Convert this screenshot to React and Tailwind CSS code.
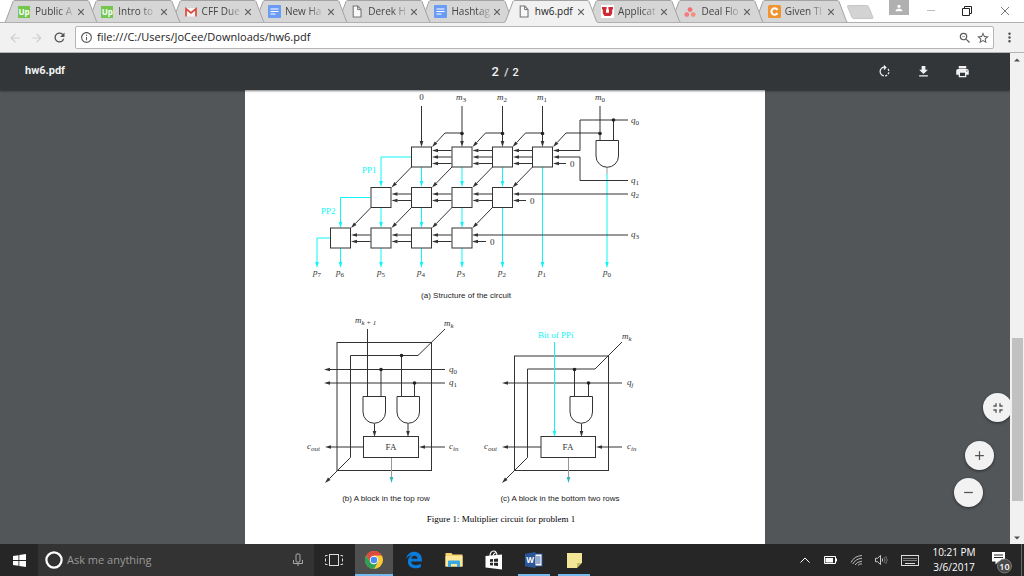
import React from 'react';
import {
  MdAdd,
  MdArrowBack,
  MdArrowForward,
  MdFileDownload,
  MdFullscreenExit,
  MdInfoOutline,
  MdMoreVert,
  MdPerson,
  MdPrint,
  MdRefresh,
  MdRemove,
  MdRotateRight,
  MdStarBorder,
  MdZoomOut,
} from 'react-icons/md';

const INK = '#333';
const CYAN = '#0ff5f5';

/* ---------- Favicons ---------- */

const UpIcon = () => (
  <span className="flex h-3 w-3 items-center justify-center bg-[#73c74f] text-[8px] leading-none font-bold text-white">Up</span>
);

const GmailIcon = () => (
  <svg viewBox="0 0 12 12" className="h-3 w-3">
    <path d="M0.5 2h11v8.5h-11z" fill="#f3f3f3" />
    <path d="M1 10.5V2.8L6 7l5-4.2v7.7" fill="none" stroke="#d9493c" strokeWidth="1.7" />
  </svg>
);

const DocsIcon = () => (
  <svg viewBox="0 0 13 13" className="h-[13px] w-[13px]">
    <rect width="13" height="13" rx="1" fill="#6a9cf5" />
    <path d="M2.5 4h8M2.5 6.5h8M2.5 9h5" stroke="#fff" strokeWidth="1.1" />
  </svg>
);

const FileIcon = () => (
  <svg viewBox="0 0 12 13" className="h-[13px] w-3">
    <path d="M2.2 1h4.6l3.2 3.4V12H2.2z" fill="#f8f8f8" stroke="#777" strokeWidth="1.1" />
    <path d="M6.6 1v3.6H10" fill="none" stroke="#777" strokeWidth="1" />
  </svg>
);

const UtahIcon = () => (
  <svg viewBox="0 0 13 13" className="h-[13px] w-[13px]">
    <rect width="13" height="13" fill="#fff" />
    <path d="M1 2h4.6v2.6H5v3.2h3V4.6h-.6V2H12v2.6h-.8v4L9.4 11H3.6L1.8 8.6v-4H1z" fill="#cf2b35" />
  </svg>
);

const AsanaIcon = () => (
  <svg viewBox="0 0 12 12" className="h-3 w-3">
    <circle cx="6" cy="3.6" r="2.4" fill="#f2706f" />
    <circle cx="2.8" cy="8.6" r="2.4" fill="#f5797f" />
    <circle cx="9.2" cy="8.6" r="2.4" fill="#f58f7c" />
  </svg>
);

const CheggIcon = () => (
  <svg viewBox="0 0 13 13" className="h-[13px] w-[13px]">
    <rect width="13" height="13" rx="1.5" fill="#f1942f" />
    <path d="M9.4 4.9A3.2 3.2 0 1 0 9.4 8.1" fill="none" stroke="#fff" strokeWidth="2.1" />
  </svg>
);

const tabs = [
  { title: 'Public A', Icon: UpIcon },
  { title: 'Intro to', Icon: UpIcon },
  { title: 'CFF Due', Icon: GmailIcon },
  { title: 'New Ha', Icon: DocsIcon },
  { title: 'Derek H', Icon: FileIcon },
  { title: 'Hashtag', Icon: DocsIcon },
  { title: 'hw6.pdf', Icon: FileIcon, active: true },
  { title: 'Applicat', Icon: UtahIcon },
  { title: 'Deal Flo', Icon: AsanaIcon },
  { title: 'Given Tl', Icon: CheggIcon },
];

/* ---------- Browser chrome ---------- */

const Tab = ({ title, Icon, active, order }) => (
  <div className="relative h-[23px] min-w-0 flex-1" style={{ zIndex: order }}>
    <svg viewBox="0 0 94 23" preserveAspectRatio="none" className="absolute top-0 left-0 h-[23px] w-[94px]">
      <path
        d="M0 23L1.5 21.5L9 1.5Q9.5 0.5 11 0.5H83Q84.5 0.5 85 1.5L92.5 21.5L94 23z"
        fill={active ? '#f1f1f1' : '#d6d6d6'}
      />
      <path
        d="M0 22.5L1.5 21.5L9 1.5Q9.5 0.5 11 0.5H83Q84.5 0.5 85 1.5L92.5 21.5L94 22.5"
        fill="none"
        stroke="#a3a3a3"
      />
      {!active && <path d="M0 22.5H94" stroke="#b0b0b0" />}
    </svg>
    <div className="relative flex h-[23px] items-center pl-[14px]">
      <button type="button" role="tab" aria-selected={!!active} className="flex w-[55px] items-center">
        <span className="flex w-[17px] shrink-0">
          <Icon />
        </span>
        <span
          className={
            active
              ? 'text-[10px] whitespace-nowrap text-[#222]'
              : 'text-[10px] whitespace-nowrap text-[#444] [mask-image:linear-gradient(to_right,black_65%,rgba(0,0,0,0.2))]'
          }
        >
          {title}
        </span>
      </button>
      <button type="button" aria-label="Close tab" className="ml-1">
        <svg viewBox="0 0 8 8" className="h-2 w-2">
          <path d="M1.2 1.2l5.6 5.6M6.8 1.2L1.2 6.8" stroke="#5a5a5a" strokeWidth="1.1" />
        </svg>
      </button>
    </div>
  </div>
);

const TabStrip = () => (
  <div className="flex h-[23px] shrink-0 border-b border-[#b0b0b0] bg-white">
    <div role="tablist" className="isolate ml-1 flex h-[23px] w-[833px]">
      {tabs.map((t, i) => (
        <Tab key={i} {...t} order={t.active ? 20 : 10 - i} />
      ))}
    </div>
    <button type="button" aria-label="New tab" className="mt-[5px] ml-[9px] h-[15px]">
      <svg viewBox="0 0 28 15" className="h-[15px] w-7">
        <path d="M2.5 0.5H20.5Q22 0.5 22.5 1.5L27 12.5Q27.3 13.5 26 13.5H8Q6.5 13.5 6 12.5L1.5 1.5Q1.3 0.5 2.5 0.5z" fill="#d3d3d3" stroke="#c6c6c6" />
      </svg>
    </button>
    <div className="ml-auto flex">
      <button type="button" aria-label="Profile" className="flex h-[15px] w-5 items-center justify-center bg-[#b0b0b0] text-white">
        <MdPerson size={10} />
      </button>
      <button type="button" aria-label="Minimize" className="ml-3 flex h-[22px] w-5 items-center justify-center">
        <svg viewBox="0 0 8 8" className="h-2 w-2"><path d="M0 3.5H8" stroke="#bbb" /></svg>
      </button>
      <button type="button" aria-label="Restore" className="ml-4 flex h-[22px] w-5 items-center justify-center">
        <svg viewBox="0 0 10 10" className="h-[10px] w-[10px]">
          <path d="M0.5 2.5H7.5V9.5H0.5zM2.5 2.5V0.5H9.5V7.5H7.5" fill="none" stroke="#222" />
        </svg>
      </button>
      <button type="button" aria-label="Close" className="mr-[9px] ml-[18px] flex h-[22px] w-5 items-center justify-center">
        <svg viewBox="0 0 10 10" className="h-[10px] w-[10px]">
          <path d="M1 1l8 8M9 1L1 9" stroke="#777" />
        </svg>
      </button>
    </div>
  </div>
);

const AddressBar = () => (
  <div className="flex h-[30px] shrink-0 items-center border-b border-[#b5b5b5] bg-[#f1f1f1] pl-2">
    <button type="button" aria-label="Back" className="mr-2 text-[#cfcfcf]"><MdArrowBack size={14} /></button>
    <button type="button" aria-label="Forward" className="mr-2 text-[#cfcfcf]"><MdArrowForward size={14} /></button>
    <button type="button" aria-label="Reload" className="mr-2 text-[#555]"><MdRefresh size={15} /></button>
    <div className="flex h-[23px] flex-1 items-center rounded-xs border border-[#b5b5b5] bg-white pr-[3px] pl-1">
      <MdInfoOutline size={13} className="mr-1 text-[#5a5a5a]" />
      <input
        type="text"
        aria-label="Address"
        defaultValue="file:///C:/Users/JoCee/Downloads/hw6.pdf"
        className="min-w-0 flex-1 bg-transparent text-[11px] text-[#222] outline-none"
      />
      <button type="button" aria-label="Zoom" className="mr-1 text-[#5a5a5a]"><MdZoomOut size={14} /></button>
      <button type="button" aria-label="Bookmark" className="text-[#5a5a5a]"><MdStarBorder size={14} /></button>
    </div>
    <button type="button" aria-label="Menu" className="ml-2 mr-[7px] text-[#555]"><MdMoreVert size={15} /></button>
  </div>
);

/* ---------- Circuit drawing primitives ---------- */

// Polyline with an arrow head at its last point
const Arrow = ({ pts, color = INK, head = color }) => {
  const [x1, y1] = pts[pts.length - 2];
  const [x, y] = pts[pts.length - 1];
  const a = Math.atan2(y - y1, x - x1);
  const len = 6;
  const half = 1.8;
  const bx = x - len * Math.cos(a);
  const by = y - len * Math.sin(a);
  const dx = half * Math.sin(a);
  const dy = half * Math.cos(a);
  return (
    <g>
      <polyline points={[...pts.slice(0, -1), [bx, by]].map((p) => p.join(',')).join(' ')} fill="none" stroke={color} />
      <polygon points={`${x},${y} ${bx + dx},${by - dy} ${bx - dx},${by + dy}`} fill={head} />
    </g>
  );
};

const Line = ({ pts, color = INK }) => (
  <polyline points={pts.map((p) => p.join(',')).join(' ')} fill="none" stroke={color} />
);

const Dot = ({ x, y }) => <circle cx={x} cy={y} r="1.8" fill="#222" />;

const Gate = ({ x, y }) => (
  <path d={`M${x} ${y}h22.5v15.5a11.25 11.25 0 0 1 -22.5 0z`} fill="#fff" stroke={INK} />
);

// Italic variable with a subscript; digits in the subscript stay upright
const Label = ({ x, y, base, sub, anchor = 'start' }) => (
  <text x={x} y={y} textAnchor={anchor} fontSize="9" fontStyle="italic" fill="#333">
    {base}
    <tspan fontSize="7" dy="2" fontStyle={isNaN(sub) ? 'italic' : 'normal'}>{sub}</tspan>
  </text>
);

const svgFont = "font-['Liberation_Serif',serif]";

/* ---------- (a) whole circuit ---------- */

const cols = [340.5, 381, 421.5, 462, 502.5, 542.5];
const rows = [
  { y: 157, first: 2, wires: [150.5, 157, 163.5] },
  { y: 197.5, first: 1, wires: [194, 200.5] },
  { y: 238, first: 0, wires: [235, 241.5] },
];

const CircuitStructure = () => (
  <svg viewBox="291 90 350 198" className={`block h-[198px] w-[350px] ${svgFont}`}>
    {/* partial products and outputs */}
    {[2, 3, 4].map((c) => <Arrow key={c} pts={[[cols[c], 167], [cols[c], 187]]} color={CYAN} />)}
    {[1, 2, 3].map((c) => <Arrow key={c} pts={[[cols[c], 207], [cols[c], 228]]} color={CYAN} />)}
    {[0, 1, 2, 3].map((c) => <Arrow key={c} pts={[[cols[c], 248], [cols[c], 268]]} color={CYAN} />)}
    <Arrow pts={[[502.5, 207], [502.5, 268]]} color={CYAN} />
    <Arrow pts={[[542.5, 167], [542.5, 268]]} color={CYAN} />
    <Line pts={[[607, 167], [607, 174]]} color="#999" />
    <Arrow pts={[[607, 174], [607, 268]]} color={CYAN} />
    <Arrow pts={[[411, 157], [381, 157], [381, 187]]} color={CYAN} />
    <Arrow pts={[[370, 197.5], [340.5, 197.5], [340.5, 228]]} color={CYAN} />
    <Arrow pts={[[330, 238], [317, 238], [317, 268]]} color={CYAN} />

    {/* top inputs */}
    {[2, 3, 4, 5].map((c) => <Arrow key={c} pts={[[cols[c], 106], [cols[c], 147]]} />)}
    {[3, 4, 5].map((c) => (
      <g key={c}>
        <Arrow pts={[[cols[c], 133], [cols[c] - 17, 133], [cols[c] - 30, 147]]} />
        <Dot x={cols[c]} y={133.5} />
      </g>
    ))}
    <Line pts={[[600, 106], [600, 140]]} />
    <Arrow pts={[[600, 133], [566, 133], [553, 147]]} />
    <Dot x={600} y={133.5} />

    {/* q inputs */}
    <Arrow pts={[[628, 120], [580, 120], [580, 150.5], [553, 150.5]]} />
    <Line pts={[[613.5, 120], [613.5, 140]]} />
    <Dot x={613.5} y={120} />
    <Arrow pts={[[628, 180.5], [580, 180.5], [580, 157], [553, 157]]} />
    <Arrow pts={[[566, 163.5], [553, 163.5]]} />
    <Arrow pts={[[628, 194], [513, 194]]} />
    <Arrow pts={[[526, 200.5], [513, 200.5]]} />
    <Arrow pts={[[628, 235], [472, 235]]} />
    <Arrow pts={[[486, 241.5], [472, 241.5]]} />
    <Gate x={596} y={140.5} />

    {/* cells with the wires that join them */}
    {rows.map((r, ri) =>
      [0, 1, 2, 3].map((i) => {
        const x = cols[r.first + i];
        return (
          <g key={`${ri}-${i}`}>
            <rect x={x - 10} y={r.y - 10} width="20" height="20" fill="#fff" stroke={INK} />
            {i < 3 && r.wires.map((w) => <Arrow key={w} pts={[[x + 30, w], [x + 10.5, w]]} />)}
            {ri < 2 && <Arrow pts={[[x - 10, r.y + 10], [x - 30, r.y + 30.5]]} />}
          </g>
        );
      })
    )}

    <text x="421.5" y="100" textAnchor="middle" fontSize="9" fill="#333">0</text>
    <Label x={461} y={100} base="m" sub="3" anchor="middle" />
    <Label x={502} y={100} base="m" sub="2" anchor="middle" />
    <Label x={542} y={100} base="m" sub="1" anchor="middle" />
    <Label x={600} y={100} base="m" sub="0" anchor="middle" />
    <Label x={631} y={123} base="q" sub="0" />
    <Label x={631} y={183} base="q" sub="1" />
    <Label x={631} y={196} base="q" sub="2" />
    <Label x={631} y={237} base="q" sub="3" />
    <text x="570" y="167" fontSize="9" fill="#333">0</text>
    <text x="530" y="204" fontSize="9" fill="#333">0</text>
    <text x="490" y="245" fontSize="9" fill="#333">0</text>
    <text x="362" y="173" fontSize="9" fill={CYAN}>PP1</text>
    <text x="321" y="214" fontSize="9" fill={CYAN}>PP2</text>
    {[[317, 7], [340, 6], [381, 5], [421, 4], [461, 3], [502, 2], [542, 1], [607, 0]].map(([x, n]) => (
      <Label key={n} x={x} y={275} base="p" sub={n} anchor="middle" />
    ))}
  </svg>
);

/* ---------- (b) and (c) single blocks ---------- */

const TopRowBlock = () => (
  <svg viewBox="301 310 170 183" className={`block h-[183px] w-[170px] ${svgFont}`}>
    <rect x="337" y="342.5" width="94.5" height="128" fill="none" stroke={INK} />
    <Line pts={[[367.5, 329], [367.5, 396]]} />
    <Arrow pts={[[445, 329], [418, 355.5], [350.5, 355.5], [350.5, 457.5], [325, 483]]} />
    <Arrow pts={[[445, 369.5], [324, 369.5]]} />
    <Arrow pts={[[445, 383], [324, 383]]} />
    <Line pts={[[401.5, 355.5], [401.5, 396]]} />
    <Line pts={[[381, 369.5], [381, 396]]} />
    <Line pts={[[414.5, 383], [414.5, 396]]} />
    <Dot x={401.5} y={355.5} />
    <Dot x={381} y={369.5} />
    <Dot x={414.5} y={383} />
    <Gate x={363} y={396.5} />
    <Gate x={397} y={396.5} />
    <Arrow pts={[[374.5, 423.5], [374.5, 437]]} />
    <Arrow pts={[[408, 423.5], [408, 437]]} />
    <rect x="363.5" y="436.5" width="55" height="21" fill="#fff" stroke={INK} />
    <text x="391" y="450" textAnchor="middle" fontSize="9" fill="#333">FA</text>
    <Arrow pts={[[363.5, 447], [325, 447]]} />
    <Arrow pts={[[445, 447], [419, 447]]} />
    <Arrow pts={[[391.5, 458], [391.5, 483]]} color="#999" head="#2fb5b5" />
    <Label x={355} y={323} base="m" sub="k + 1" />
    <Label x={444} y={326} base="m" sub="k" />
    <Label x={449} y={372} base="q" sub="0" />
    <Label x={449} y={385} base="q" sub="1" />
    <Label x={307} y={449} base="c" sub="out" />
    <Label x={449} y={449} base="c" sub="in" />
  </svg>
);

const LowerRowBlock = () => (
  <svg viewBox="475 310 170 183" className={`block h-[183px] w-[170px] ${svgFont}`}>
    <rect x="514.5" y="356" width="94" height="114.5" fill="none" stroke={INK} />
    <Arrow pts={[[622, 342], [595, 369], [527.5, 369], [527.5, 457.5], [502, 483]]} />
    <Arrow pts={[[622, 383], [502, 383]]} />
    <Line pts={[[574.5, 369], [574.5, 396]]} />
    <Line pts={[[588.5, 383], [588.5, 396]]} />
    <Dot x={574.5} y={369.5} />
    <Dot x={588.5} y={383} />
    <Gate x={570} y={396.5} />
    <Arrow pts={[[581.5, 423.5], [581.5, 437]]} />
    <rect x="541" y="436.5" width="54.5" height="21" fill="#fff" stroke={INK} />
    <Arrow pts={[[554.5, 342], [554.5, 437]]} color={CYAN} />
    <text x="568" y="450" textAnchor="middle" fontSize="9" fill="#333">FA</text>
    <Arrow pts={[[541, 447], [502, 447]]} />
    <Arrow pts={[[622, 447], [596, 447]]} />
    <Arrow pts={[[568.5, 458], [568.5, 483]]} color="#999" head="#2fb5b5" />
    <text x="538" y="338" fontSize="9" fill={CYAN}>Bit of PPi</text>
    <Label x={622} y={339} base="m" sub="k" />
    <Label x={627} y={385} base="q" sub="j" />
    <Label x={484} y={449} base="c" sub="out" />
    <Label x={627} y={449} base="c" sub="in" />
  </svg>
);

const captionClass = "text-center font-['Liberation_Sans',sans-serif] leading-[12px] text-[#222]";

const PdfPage = () => (
  <main className="mx-auto min-h-full w-[520px] bg-white">
    <figure>
      <figure className="ml-[46px] w-[350px]">
        <CircuitStructure />
        <figcaption className={`mt-[2px] text-[8px] ${captionClass}`}>(a) Structure of the circuit</figcaption>
      </figure>
      <div className="mt-2 ml-[56px] flex gap-1">
        <figure>
          <TopRowBlock />
          <figcaption className={`text-[8px] ${captionClass}`}>(b) A block in the top row</figcaption>
        </figure>
        <figure>
          <LowerRowBlock />
          <figcaption className={`text-[8px] ${captionClass}`}>(c) A block in the bottom two rows</figcaption>
        </figure>
      </div>
      <figcaption className="mt-2 pr-2 text-center font-['Liberation_Serif',serif] text-[9px] leading-[12px] text-black">
        Figure 1: Multiplier circuit for problem 1
      </figcaption>
    </figure>
  </main>
);

/* ---------- PDF viewer ---------- */

const roundButton =
  'absolute flex h-[29px] w-[29px] items-center justify-center rounded-full bg-[#f2f2f2] text-[#555] shadow-[0_1px_3px_rgba(0,0,0,0.5)]';

const PdfViewer = () => (
  <div className="flex min-h-0 flex-1">
    <div className="relative flex min-w-0 flex-1 flex-col overflow-hidden bg-[#525659]">
      <header className="z-10 grid h-[37px] shrink-0 grid-cols-3 items-center bg-[#323639] pr-10 pl-[25px] font-['Roboto',sans-serif] text-[#f1f1f1] shadow-[0_1px_2px_rgba(0,0,0,0.5)]">
        <h1 className="text-[11px] font-bold">hw6.pdf</h1>
        <div className="flex items-baseline justify-center gap-1 pl-[14px] text-[11px] font-medium">
          <input type="text" aria-label="Page number" defaultValue="2" className="w-[10px] bg-transparent text-center text-[13px] outline-none" />
          <span>/</span>
          <span>2</span>
        </div>
        <div className="flex justify-end gap-6">
          <button type="button" aria-label="Rotate clockwise"><MdRotateRight size={15} /></button>
          <button type="button" aria-label="Download"><MdFileDownload size={15} /></button>
          <button type="button" aria-label="Print"><MdPrint size={15} /></button>
        </div>
      </header>
      <div className="min-h-0 flex-1 overflow-hidden">
        <PdfPage />
      </div>
      <button type="button" aria-label="Fit to page" className={`${roundButton} -right-[2px] bottom-[122px]`}><MdFullscreenExit size={16} /></button>
      <button type="button" aria-label="Zoom in" className={`${roundButton} right-4 bottom-[74px]`}><MdAdd size={15} /></button>
      <button type="button" aria-label="Zoom out" className={`${roundButton} right-[27px] bottom-[37px]`}><MdRemove size={15} /></button>
    </div>
    <div className="flex w-[14px] shrink-0 flex-col items-center bg-[#f1f1f1] py-1">
      <svg viewBox="0 0 6 4" className="mt-px h-1 w-[6px]"><path d="M3 0.5L6 3.5H0z" fill="#505050" /></svg>
      <div className="grow-[275]" />
      <div className="w-[11px] grow-[163] bg-[#c1c1c1]" />
      <div className="grow-[35]" />
      <svg viewBox="0 0 6 4" className="h-1 w-[6px]"><path d="M3 3.5L6 0.5H0z" fill="#505050" /></svg>
    </div>
  </div>
);

/* ---------- Taskbar ---------- */

const ChromeLogo = () => (
  <svg viewBox="0 0 18 18" className="h-[18px] w-[18px]">
    <circle cx="9" cy="9" r="9" fill="#fcc934" />
    <path d="M9 9L1.2 4.5A9 9 0 0 1 16.8 4.5H9z" fill="#dd4b3e" />
    <path d="M1.2 4.5L5.2 11.2L9 9V4.5z" fill="#dd4b3e" />
    <path d="M1.2 4.5L5.2 11.2Q6.5 13.3 9 13.2L12.8 11.2L9 18A9 9 0 0 1 1.2 4.5z" fill="#2ea05a" />
    <circle cx="9" cy="9" r="4.2" fill="#fff" />
    <circle cx="9" cy="9" r="3.3" fill="#4a8af4" />
  </svg>
);

const EdgeLogo = () => (
  <svg viewBox="0 0 24 24" className="h-[18px] w-[18px]">
    <path
      d="M1.5 10.5C2.5 4.5 7 1 12.5 1c6.5 0 10 5 10 10.5V14H8.2c.2 3.5 3 5 6.3 5 2.5 0 4.7-.7 6.6-1.9v4.4C19.2 22.5 16.5 23 14 23 8 23 3.8 19.5 3.8 14c0-3.500 2-6.500 5-8-3.300.3-5.800 2-7.300 4.500zM8.400 10.200h8.200C16.500 7.600 15 6.200 12.700 6.200S8.800 7.700 8.400 10.200z"
      fill="#0b7bdc"
    />
  </svg>
);

const ExplorerLogo = () => (
  <svg viewBox="0 0 18 16" className="h-4 w-[18px]">
    <path d="M0.5 1h6l1 1.5h10v12H0.5z" fill="#f6d36f" />
    <path d="M0.5 4h17v10.5H0.5z" fill="#fce79b" />
    <path d="M3 15V9.5Q3 8.5 4 8.5H14Q15 8.5 15 9.5V15H12V12H6V15z" fill="#3aa7e0" />
  </svg>
);

const StoreLogo = () => (
  <svg viewBox="0 0 18 20" className="h-5 w-[18px]">
    <path d="M5 6C5 3 6.5 1 8.5 1S12 3 12 6M8 6c.5-2.5 2-3.5 3.5-3.2" fill="none" stroke="#fff" strokeWidth="1.1" />
    <path d="M0.5 6L17 4.5V19.5L0.5 17.5z" fill="#fff" />
    <path d="M5 9.2l3-.2v2.8H5zM9 8.9l4-.3v3.2H9zM5 12.7h3v2.8l-3-.2zM9 12.7h4v3.2l-4-.3z" fill="#262626" />
  </svg>
);

const WordLogo = () => (
  <svg viewBox="0 0 18 16" className="h-4 w-[18px]">
    <rect x="8.5" y="2" width="8.5" height="12" fill="#fff" stroke="#2b579a" />
    <path d="M11 5h4.5M11 7h4.5M11 9h4.5M11 11h4.5" stroke="#2b579a" />
    <path d="M0 1.8L10.5 0V16L0 14.2z" fill="#2b579a" />
    <text x="5.2" y="11" textAnchor="middle" fontSize="8" fontWeight="700" fill="#fff">W</text>
  </svg>
);

const NoteLogo = () => (
  <svg viewBox="0 0 15 15" className="h-[15px] w-[15px]">
    <path d="M0 0H15V10H10V15H0z" fill="#f3e696" />
    <path d="M10 10H15L10 15z" fill="#c9bb62" />
  </svg>
);

const apps = [
  { name: 'Chrome', Logo: ChromeLogo, cell: 'mx-px w-[38px] border-[#76b9ed] bg-[#505050]' },
  { name: 'Edge', Logo: EdgeLogo, cell: 'mx-px w-[38px] border-transparent' },
  { name: 'File Explorer', Logo: ExplorerLogo, cell: 'mx-px w-[38px] border-transparent' },
  { name: 'Store', Logo: StoreLogo, cell: 'mx-px w-[38px] border-transparent' },
  { name: 'Word', Logo: WordLogo, cell: 'mx-1 w-8 border-[#76b9ed]' },
  { name: 'Sticky Notes', Logo: NoteLogo, cell: 'mx-1 w-8 border-[#76b9ed]' },
];

const Taskbar = () => (
  <footer className="flex h-8 shrink-0 items-center bg-[#262626] text-white">
    <button type="button" aria-label="Start" className="flex h-8 w-[38px] items-center justify-center">
      <svg viewBox="0 0 13 13" className="h-[13px] w-[13px]">
        <path d="M0 2L5.5 1.2V6H0zM6.3 1.1L13 0V6H6.3zM0 6.9H5.5V11.7L0 11zM6.3 6.9H13V13L6.3 12z" fill="#fff" />
      </svg>
    </button>
    <div className="flex h-8 w-[276px] items-center bg-[#333] pr-[10px] pl-[7px]">
      <svg viewBox="0 0 18 18" className="h-[18px] w-[18px]">
        <circle cx="9" cy="9" r="7.6" fill="none" stroke="#fff" strokeWidth="2.2" />
      </svg>
      <input
        type="text"
        aria-label="Search"
        placeholder="Ask me anything"
        className="ml-1 min-w-0 flex-1 bg-transparent text-[11px] outline-none placeholder:text-[#9a9a9a]"
      />
      <svg viewBox="0 0 12 14" className="h-[14px] w-3" fill="none" stroke="#aaa">
        <rect x="4" y="1" width="4" height="8" rx="1" />
        <path d="M1.5 7v3.5h9V7M6 10.5V13" />
      </svg>
    </div>
    <button type="button" aria-label="Task view" className="flex h-8 w-10 items-center justify-center">
      <svg viewBox="0 0 18 12" className="h-3 w-[18px]" fill="none" stroke="#ddd">
        <rect x="4.5" y="0.5" width="9" height="11" />
        <path d="M2.5 1.5H0.5V10.5H2.5M15.5 1.5H17.5V10.5H15.5" strokeDasharray="3 2" />
      </svg>
    </button>
    {apps.map(({ name, Logo, cell }) => (
      <button
        key={name}
        type="button"
        aria-label={name}
        className={`flex h-8 items-center justify-center border-b-2 pt-[2px] ${cell}`}
      >
        <Logo />
      </button>
    ))}
    <div className="ml-auto flex items-center">
      <svg viewBox="0 0 12 8" className="h-2 w-3" fill="none" stroke="#fff"><path d="M1.5 6.5L6 2L10.5 6.5" /></svg>
      <svg viewBox="0 0 13 8" className="ml-[13px] h-2 w-[13px]">
        <path d="M0.5 0.5H11.5V7.5H0.5z" fill="none" stroke="#fff" />
        <path d="M1.5 2H9V6.5H1.5zM12 2.5h1v3h-1z" fill="#fff" />
      </svg>
      <svg viewBox="0 0 13 12" className="ml-[13px] h-3 w-[13px]" fill="none" stroke="#ccc" strokeWidth="0.9">
        <path d="M1 8.5Q4 2 12 1.5M2.8 10Q5.5 4.8 12 4.3M5 11Q7 7.6 12 7.2M8 11.3Q9 9.8 12 9.8" />
      </svg>
      <svg viewBox="0 0 13 12" className="ml-3 h-3 w-[13px]" fill="none" stroke="#ddd" strokeWidth="0.9">
        <path d="M0.5 4.3H2.5L5.5 1.5V10.5L2.5 7.7H0.5z" />
        <path d="M7.2 4.5Q8.2 6 7.2 7.5" />
        <path d="M9 3Q11 6 9 9M10.8 2Q13.5 6 10.8 10" stroke="#777" />
      </svg>
      <svg viewBox="0 0 18 11" className="ml-[13px] h-[11px] w-[18px]" fill="none" stroke="#ddd">
        <rect x="0.5" y="0.5" width="17" height="10" />
        <path d="M2.5 3.5H16M2.5 5.5H16" strokeDasharray="1 1" />
        <path d="M4 8.5H14" />
      </svg>
      <time className="ml-3 w-[46px] text-center text-[10px] leading-[15px] whitespace-nowrap">
        10:21 PM
        <br />
        3/6/2017
      </time>
      <svg viewBox="0 0 22 28" className="ml-[14px] h-7 w-[22px]">
        <path d="M1 6H14V15.5H7.5L4.5 18.5V15.5H1z" fill="#fff" />
        <path d="M3 9H12M3 11.5H12" stroke="#262626" />
        <circle cx="13.5" cy="20" r="7" fill="#4a4a4a" stroke="#888" strokeWidth="0.8" />
        <text x="13.5" y="23.5" textAnchor="middle" fontSize="9" fontWeight="600" fill="#fff">10</text>
      </svg>
      <span className="mr-[2px] ml-2 h-8 w-px bg-[#6a6a6a]" />
    </div>
  </footer>
);

const App = () => (
  <div className="flex h-screen flex-col overflow-hidden font-['Open_Sans',sans-serif]">
    <TabStrip />
    <AddressBar />
    <PdfViewer />
    <Taskbar />
  </div>
);

export default App;
